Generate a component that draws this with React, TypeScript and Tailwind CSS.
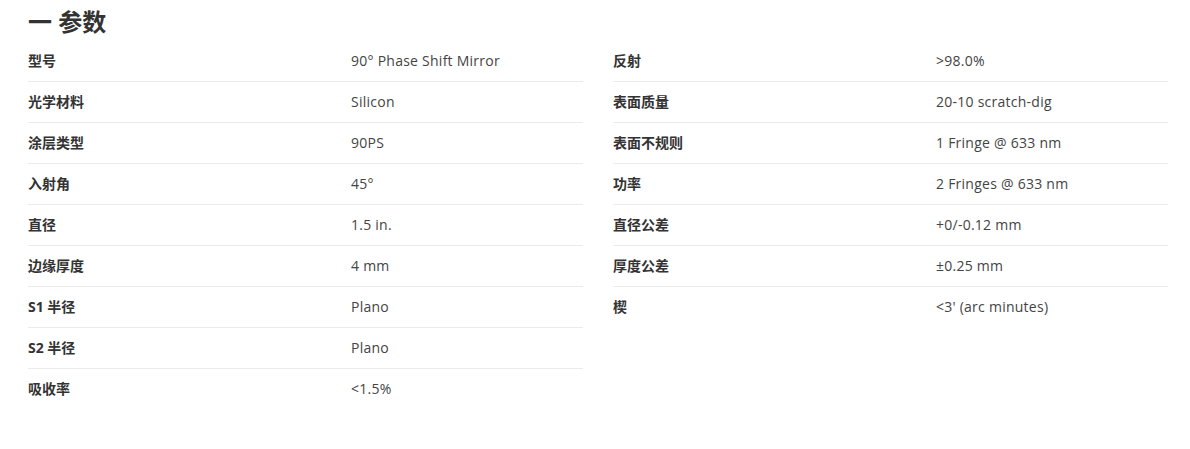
const left: [string, string][] = [
  ["型号", "90° Phase Shift Mirror"],
  ["光学材料", "Silicon"],
  ["涂层类型", "90PS"],
  ["入射角", "45°"],
  ["直径", "1.5 in."],
  ["边缘厚度", "4 mm"],
  ["S1 半径", "Plano"],
  ["S2 半径", "Plano"],
  ["吸收率", "<1.5%"],
];

const right: [string, string][] = [
  ["反射", ">98.0%"],
  ["表面质量", "20-10 scratch-dig"],
  ["表面不规则", "1 Fringe @ 633 nm"],
  ["功率", "2 Fringes @ 633 nm"],
  ["直径公差", "+0/-0.12 mm"],
  ["厚度公差", "±0.25 mm"],
  ["楔", "<3' (arc minutes)"],
];

function SpecTable({ rows }: { rows: [string, string][] }) {
  return (
    <div className="w-[555px] flex flex-col">
      {rows.map(([k, v], i) => (
        <div
          key={k}
          className={`flex items-center h-[41px] pb-[2px] ${
            i < rows.length - 1 ? "border-b border-[#ebebeb]" : ""
          }`}
        >
          <div className="w-[323px] text-[14px] font-bold text-[#333]">{k}</div>
          <div className="flex-1 text-[14px] tracking-[0.25px] text-[#444]">{v}</div>
        </div>
      ))}
    </div>
  );
}

export default function App() {
  return (
    <div
      className="w-[1190px] h-[449px] bg-white pl-[28px] pt-[4px]"
      style={{ fontFamily: '"Open Sans", "Noto Sans CJK SC", sans-serif' }}
    >
      <h2 className="text-[24px] font-bold text-[#333] leading-[36px] h-[37px]">一 参数</h2>
      <div className="flex gap-[30px]">
        <SpecTable rows={left} />
        <SpecTable rows={right} />
      </div>
    </div>
  );
}
